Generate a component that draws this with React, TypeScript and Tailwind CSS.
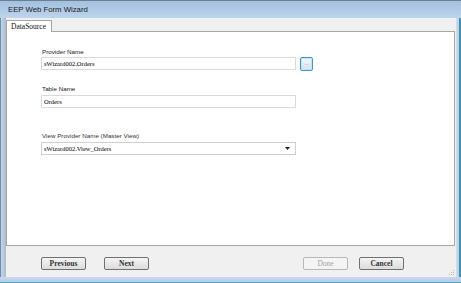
export default function App() {
  return (
    <div className="w-[461px] h-[283px] flex flex-col bg-[#bcd3ec] overflow-hidden">
      {/* title bar */}
      <div className="h-[18px] shrink-0 border-t border-[#6f7f90] bg-gradient-to-b from-[#a3c0df] to-[#bdd4ec] flex items-center pl-[8px] pt-[1px] text-[7.75px] text-[#1a1a1a] font-['Liberation_Sans',Arial,sans-serif]">
        EEP Web Form Wizard
      </div>
      <div className="flex-1 flex flex-row min-h-0">
        {/* left frame */}
        <div className="w-[5px] shrink-0 border-l border-[#7c8a9a] bg-gradient-to-r from-[#bfd5ed] to-[#a9c4e2]" />
        {/* content */}
        <div className="flex-1 bg-[#f0f0f0] flex flex-col relative border-l border-[#b4bcc6]">
          {/* tab row */}
          <div className="h-[13px] flex items-end">
            <div className="w-[46px] h-[12px] bg-white border border-b-0 border-[#a7a7a7] relative z-10 -mb-px flex items-center pl-[4px] text-[7.5px] text-[#111] font-['Liberation_Serif',serif]">
              DataSource
            </div>
          </div>
          {/* panel */}
          <div className="mr-[1px] h-[215px] bg-white border border-[#a7a7a7] flex flex-col pl-[34px] pt-[16px]">
            <div className="h-[8px] leading-[8px] text-[6.25px] text-[#222] ml-[1px] mb-[1px] font-['Liberation_Sans',Arial,sans-serif]">
              Provider Name
            </div>
            <div className="flex flex-row items-start gap-[4px]">
              <div className="w-[255px] h-[13px] border border-[#dadada] flex items-center pl-[2px] text-[6.5px] text-[#000] font-['Liberation_Serif',serif]">
                sWizard002.Orders
              </div>
              <div className="w-[13px] h-[14px] rounded-[2px] border border-[#3a95d4] bg-gradient-to-b from-[#f3f7fa] to-[#d9e3ea] shadow-[inset_0_0_0_1px_#bfe3f7] flex items-center justify-center text-[3px] text-[#333] leading-none font-['Liberation_Sans',Arial,sans-serif]">
                ...
              </div>
            </div>
            <div className="h-[8px] leading-[8px] text-[6.25px] text-[#222] ml-[1px] mt-[14px] mb-[2px] font-['Liberation_Sans',Arial,sans-serif]">
              Table Name
            </div>
            <div className="w-[255px] h-[13px] border border-[#dadada] flex items-center pl-[2px] text-[6.5px] text-[#000] font-['Liberation_Serif',serif]">
              Orders
            </div>
            <div className="h-[8px] leading-[8px] text-[6.25px] text-[#333] ml-[1px] mt-[24px] mb-[2px] font-['Liberation_Sans',Arial,sans-serif]">
              View Provider Name (Master View)
            </div>
            <div className="w-[255px] h-[13px] border border-[#cfcfcf] flex items-center justify-between pl-[2px] pr-[5px] text-[6.5px] text-[#000] font-['Liberation_Serif',serif]">
              <span>sWizard002.View_Orders</span>
              <svg width="5" height="3" viewBox="0 0 5 3">
                <path d="M0 0H5L2.5 3Z" fill="#222" />
              </svg>
            </div>
          </div>
          {/* buttons */}
          <div className="flex-1 flex flex-row items-start pt-[11px] pl-[35px] pr-[52px] font-['Liberation_Serif',serif]">
            <div className="w-[45px] h-[13px] rounded-[2px] border border-[#707070] bg-gradient-to-b from-[#f4f4f4] to-[#dcdcdc] flex items-center justify-center text-[7.5px] font-bold text-[#333]">
              Previous
            </div>
            <div className="w-[45px] h-[13px] ml-[18px] rounded-[2px] border border-[#707070] bg-gradient-to-b from-[#f4f4f4] to-[#dcdcdc] flex items-center justify-center text-[7.5px] font-bold text-[#333]">
              Next
            </div>
            <div className="flex-1" />
            <div className="w-[45px] h-[13px] rounded-[2px] border border-[#b5b9bc] bg-[#f4f4f4] flex items-center justify-center text-[7.5px] text-[#a3a3a3]">
              Done
            </div>
            <div className="w-[45px] h-[13px] ml-[11px] rounded-[2px] border border-[#707070] bg-gradient-to-b from-[#f4f4f4] to-[#dcdcdc] flex items-center justify-center text-[7.5px] font-bold text-[#333]">
              Cancel
            </div>
          </div>
          {/* resize grip */}
          <svg className="absolute right-[1px] bottom-[1px]" width="6" height="6" viewBox="0 0 6 6">
            <rect x="4" y="0" width="1" height="1" fill="#b8b8b8" />
            <rect x="2" y="2" width="1" height="1" fill="#b8b8b8" />
            <rect x="4" y="2" width="1" height="1" fill="#b8b8b8" />
            <rect x="0" y="4" width="1" height="1" fill="#b8b8b8" />
            <rect x="2" y="4" width="1" height="1" fill="#b8b8b8" />
            <rect x="4" y="4" width="1" height="1" fill="#b8b8b8" />
          </svg>
        </div>
        {/* right frame */}
        <div className="w-[5px] shrink-0 border-l border-[#dcdcdc] bg-[#bcd3ec] border-r-2 border-r-[#3f93b6]" />
      </div>
      {/* bottom frame */}
      <div className="h-[6px] shrink-0 bg-gradient-to-b from-[#c4d9ef] to-[#b5cde8] border-b border-[#5aa0c0]" />
    </div>
  );
}
